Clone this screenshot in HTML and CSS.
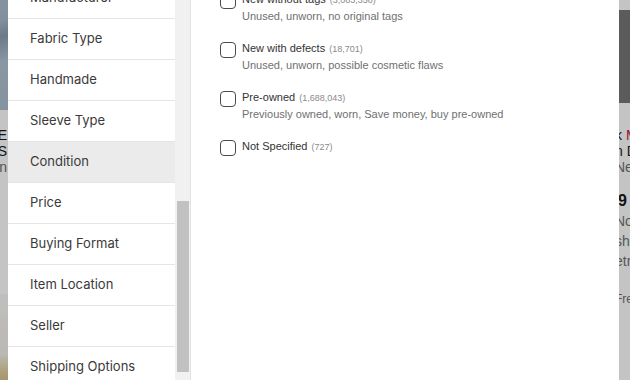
FILE: index.html
```html
<!DOCTYPE html>
<html lang="en">
<head>
    <meta charset="UTF-8">
    <meta name="viewport" content="width=device-width, initial-scale=1.0">
    <title>Filter - Condition</title>
    <link rel="stylesheet" href="styles.css">
</head>
<body>
    <!-- Listing page behind the dialog -->
    <div class="page">
        <div class="card card-left">
            <div class="thumb thumb-blue"></div>
            <div class="card-text">
                <div class="card-title">PLUS SIZE</div>
                <div class="card-title">LINEN DRESS</div>
                <div class="card-sub">Pre-own</div>
            </div>
            <div class="thumb thumb-tan"></div>
        </div>
        <div class="card card-right">
            <div class="thumb thumb-dark"><span class="pink"></span></div>
            <div class="card-text">
                <div class="card-title">k <span class="red">M</span>ini</div>
                <div class="card-title">n Dress</div>
                <div class="card-sub">New</div>
                <div class="card-price">$9</div>
                <div class="card-sub">Now</div>
                <div class="card-sub">shipping</div>
                <div class="card-sub">etro</div>
                <div class="card-sub sponsored">Free returns</div>
            </div>
        </div>
    </div>
    <div class="overlay"></div>

    <!-- Filter dialog -->
    <div class="modal">
        <div class="filter-nav">
            <ul class="filter-list">
                <li>Manufacturer</li>
                <li>Fabric Type</li>
                <li>Handmade</li>
                <li>Sleeve Type</li>
                <li class="active">Condition</li>
                <li>Price</li>
                <li>Buying Format</li>
                <li>Item Location</li>
                <li>Seller</li>
                <li>Shipping Options</li>
            </ul>
            <div class="scroll-track">
                <div class="scroll-thumb"></div>
            </div>
        </div>

        <div class="filter-options">
            <div class="option-list">
                <label class="option">
                    <span class="checkbox"></span>
                    <span class="option-text">
                        <span class="option-title">New without tags <span class="count">(3,083,358)</span></span>
                        <span class="option-desc">Unused, unworn, no original tags</span>
                    </span>
                </label>
                <label class="option">
                    <span class="checkbox"></span>
                    <span class="option-text">
                        <span class="option-title">New with defects <span class="count">(18,701)</span></span>
                        <span class="option-desc">Unused, unworn, possible cosmetic flaws</span>
                    </span>
                </label>
                <label class="option">
                    <span class="checkbox"></span>
                    <span class="option-text">
                        <span class="option-title">Pre-owned <span class="count">(1,688,043)</span></span>
                        <span class="option-desc">Previously owned, worn, Save money, buy pre-owned</span>
                    </span>
                </label>
                <label class="option">
                    <span class="checkbox"></span>
                    <span class="option-text">
                        <span class="option-title">Not Specified <span class="count">(727)</span></span>
                    </span>
                </label>
            </div>
        </div>
    </div>
</body>
</html>
```

FILE: styles.css
```css
/* General Styles */
body {
    margin: 0;
    padding: 0;
    width: 630px;
    height: 380px;
    overflow: hidden;
    background-color: #fff;
    font-family: "Liberation Sans", Arial, sans-serif;
    position: relative;
}

/* Listing page behind the dialog */
.page {
    display: flex;
    justify-content: space-between;
    height: 380px;
}

.card {
    width: 160px;
    display: flex;
    flex-direction: column;
}

.card-left {
    margin-left: -152px;
}

.card-right {
    margin-right: -149px;
}

.thumb {
    flex-shrink: 0;
}

.thumb-blue {
    height: 110px;
    background: linear-gradient(160deg, #b8c7d6 0%, #a9bccd 45%, #8d9fb2 55%, #b3c4d4 70%, #aebfcf 100%);
}

.thumb-tan {
    margin-top: auto;
    height: 86px;
    background: linear-gradient(180deg, #f8f8f8 0%, #f2f0ea 70%, #e0cf9f 90%, #d9c48f 100%);
}

.thumb-dark {
    height: 93px;
    margin-top: 10px;
    background-color: #777;
    position: relative;
}

.pink {
    position: absolute;
    top: 2px;
    right: 0;
    width: 8px;
    height: 6px;
    background-color: #b07488;
    border-radius: 4px 0 0 4px;
}

.card-text {
    padding-top: 24px;
    font-size: 14px;
    line-height: 16px;
    color: #191919;
}

.card-left .card-text {
    text-align: right;
    padding-right: 1px;
    padding-top: 17px;
}

.card-right .card-text {
    margin-left: -4px;
}

.card-sub {
    color: #707070;
}

.card-price {
    margin-top: 18px;
    margin-left: -6px;
    font-weight: bold;
    font-size: 16px;
    margin-bottom: 4px;
}

.card-right .card-sub + .card-sub {
    margin-top: 4px;
}

.sponsored {
    margin-top: 22px !important;
    font-size: 12px;
}

.red {
    color: #c0223a;
}

.overlay {
    position: absolute;
    inset: 0;
    background-color: rgba(0, 0, 0, 0.23);
}

/* Filter dialog */
.modal {
    position: absolute;
    top: 0;
    left: 8px;
    width: 611px;
    height: 380px;
    background-color: #fff;
    display: flex;
    overflow: hidden;
}

.filter-nav {
    display: flex;
    width: 182px;
    border-right: 1px solid #e2e2e2;
    flex-shrink: 0;
}

.filter-list {
    list-style: none;
    margin: -22px 0 0;
    padding: 0;
    width: 167px;
    font-family: Inter, "Noto Sans", sans-serif;
    font-size: 13px;
    color: #3a3a3a;
}

.filter-list li {
    height: 38px;
    line-height: 38px;
    padding: 0 0 2px 22px;
    border-bottom: 1px solid #e5e5e5;
}

.filter-list li.active {
    background-color: #ebebeb;
}

.scroll-track {
    width: 15px;
    background-color: #f1f1f1;
    padding-top: 201px;
}

.scroll-thumb {
    width: 12px;
    margin-left: 2px;
    height: 171px;
    background-color: #c1c1c1;
}

/* Options */
.filter-options {
    flex: 1;
    padding-left: 29px;
}

.option-list {
    margin-top: -9px;
    display: flex;
    flex-direction: column;
    gap: 16px;
}

.option {
    display: flex;
    gap: 6px;
    min-height: 32px;
}

.checkbox {
    width: 14px;
    height: 14px;
    margin-top: 2px;
    border: 1.5px solid #4a4a4a;
    border-radius: 4px;
    flex-shrink: 0;
}

.option-text {
    display: flex;
    flex-direction: column;
    font-size: 11px;
    line-height: 16px;
}

.option-title {
    color: #333;
}

.count {
    font-size: 9px;
    color: #8a8a8a;
    margin-left: 1px;
}

.option-desc {
    color: #707070;
}
```
